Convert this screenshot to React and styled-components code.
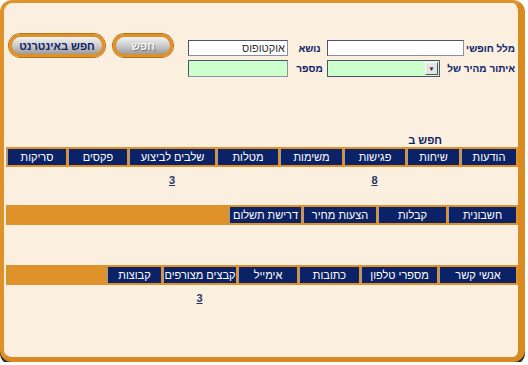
import React from 'react'
import styled, { createGlobalStyle } from 'styled-components'

const ORANGE = '#e0922a'
const NAVY = '#0c2267'
const CREAM = '#fbefdf'

const GlobalStyle = createGlobalStyle`
    body {
        margin: 0;
        background: #fff;
        font-family: "Liberation Sans", Arial, "DejaVu Sans", sans-serif;
    }
`

const sections = [
    {
        countsHeight: 38,
        tabs: [
            { label: 'הודעות', w: 55 },
            { label: 'שיחות', w: 52 },
            { label: 'פגישות', w: 61, count: 8 },
            { label: 'משימות', w: 62 },
            { label: 'מטלות', w: 61 },
            { label: 'שלבים לביצוע', w: 86, count: 3 },
            { label: 'פקסים', w: 59 },
            { label: 'סריקות', w: 59 },
        ],
    },
    {
        countsHeight: 40,
        tabs: [
            { label: 'חשבונית', w: 68 },
            { label: 'קבלות', w: 68 },
            { label: 'הצעות מחיר', w: 73 },
            { label: 'דרישת תשלום', w: 72 },
        ],
    },
    {
        countsHeight: 40,
        tabs: [
            { label: 'אנשי קשר', w: 77 },
            { label: 'מספרי טלפון', w: 76 },
            { label: 'כתובות', w: 60 },
            { label: 'אימייל', w: 59 },
            { label: 'קבצים מצורפים', w: 73, count: 3 },
            { label: 'קבוצות', w: 54 },
        ],
    },
]

function App() {
    return (
        <>
            <GlobalStyle />
            <Frame dir="rtl">
                <Header>
                    <Form>
                        <Label>מלל חופשי</Label>
                        <TextBox $w={137} />
                        <Label $center>נושא</Label>
                        <TextBox $w={100}>אוקטופוס</TextBox>

                        <Label>איתור מהיר של</Label>
                        <Select>
                            <SelectArrow>▼</SelectArrow>
                        </Select>
                        <Label $center>מספר</Label>
                        <TextBox $w={100} $green />
                    </Form>

                    <Buttons>
                        <PillButton $w={60} $light>חפש</PillButton>
                        <PillButton $w={96}>חפש באינטרנט</PillButton>
                    </Buttons>
                </Header>

                <SearchIn>חפש ב</SearchIn>

                {sections.map((s, i) => (
                    <Section key={i}>
                        <TabBar>
                            {s.tabs.map(t => (
                                <Tab key={t.label} $w={t.w}>{t.label}</Tab>
                            ))}
                        </TabBar>
                        <Counts $h={s.countsHeight}>
                            {s.tabs.map(t => (
                                <CountCell key={t.label} $w={t.w}>
                                    {t.count && <CountLink href="#">{t.count}</CountLink>}
                                </CountCell>
                            ))}
                        </Counts>
                    </Section>
                ))}
            </Frame>
        </>
    )
}

export default App

const Frame = styled.div`
    box-sizing: border-box;
    width: 525px;
    height: 362px;
    background: ${CREAM};
    border: solid ${ORANGE};
    border-width: 3px 7px 5px 4px;
    border-right-color: #d98a20;
    border-bottom-color: #d98a20;
    border-radius: 12px;
    box-shadow: 0 3px 0 #2c2c2c;
    display: flex;
    flex-direction: column;
`

const Header = styled.div`
    display: flex;
    justify-content: space-between;
    align-items: flex-start;
    padding: 31px 3px 0 5px;
    height: 46px;
`

const Form = styled.div`
    margin-top: 6px;
    display: grid;
    grid-template-columns: 51px 137px 39px 100px;
    grid-template-rows: 16px 17px;
    row-gap: 4px;
    align-items: center;
`

const Label = styled.span`
    white-space: nowrap;
    font-size: 10px;
    font-weight: bold;
    color: ${NAVY};
    justify-self: ${p => (p.$center ? 'center' : 'start')};
    padding-left: ${p => (p.$center ? '4px' : '0')};
`

const TextBox = styled.div`
    box-sizing: border-box;
    width: ${p => p.$w}px;
    height: 100%;
    justify-self: end;
    background: ${p => (p.$green ? '#ccffcc' : '#fff')};
    border: 1px solid #4a5470;
    border-right-color: #8a90a8;
    border-bottom-color: #8a90a8;
    font-size: 11px;
    line-height: 14px;
    color: #333;
    padding: 0 2px;
`

const Select = styled.div`
    box-sizing: border-box;
    width: 113px;
    height: 100%;
    justify-self: end;
    background: #ccffcc;
    border: 1px solid #4a5470;
    display: flex;
    justify-content: flex-start;
    padding: 1px;
`

const SelectArrow = styled.span`
    width: 13px;
    background: #e4e4e4;
    border: 1px solid;
    border-color: #fff #555 #555 #fff;
    box-sizing: border-box;
    font-size: 6px;
    color: #222;
    display: flex;
    align-items: center;
    justify-content: center;
`

const Buttons = styled.div`
    display: flex;
    gap: 8px;
    align-items: center;
`

const PillButton = styled.div`
    box-sizing: border-box;
    width: ${p => p.$w}px;
    height: 23px;
    border-radius: 12px;
    border: 3px solid #e0902a;
    box-shadow: 0 0 0 1px #b87216;
    background: linear-gradient(#f4f4f4, #c8c8c8 55%, #9c9c9c);
    display: flex;
    align-items: center;
    justify-content: center;
    font-size: 11px;
    font-weight: bold;
    color: ${p => (p.$light ? '#f6f6f6' : NAVY)};
    text-shadow: ${p => (p.$light ? '1px 1px 0 #777' : 'none')};
`

const SearchIn = styled.div`
    margin-top: 54px;
    padding-right: 76px;
    font-size: 11px;
    font-weight: bold;
    line-height: 13px;
    color: ${NAVY};
`

const Section = styled.div`
    display: flex;
    flex-direction: column;
`

const TabBar = styled.div`
    margin-left: 2px;
    background: ${ORANGE};
    padding: 2px 2px 2px 1px;
    height: 16px;
    display: flex;
    gap: 2px;
`

const Tab = styled.div`
    box-sizing: border-box;
    width: ${p => p.$w}px;
    background: ${NAVY};
    border-left: 1px solid #9a9cb0;
    color: #fff;
    font-size: 11px;
    display: flex;
    align-items: center;
    justify-content: center;
    white-space: nowrap;
`

const Counts = styled.div`
    height: ${p => p.$h}px;
    padding: 3px 2px 0 1px;
    box-sizing: border-box;
    display: flex;
    gap: 2px;
`

const CountCell = styled.div`
    width: ${p => p.$w}px;
    text-align: center;
`

const CountLink = styled.a`
    font-size: 11px;
    font-weight: bold;
    color: #24356a;
    text-decoration: underline;
`
